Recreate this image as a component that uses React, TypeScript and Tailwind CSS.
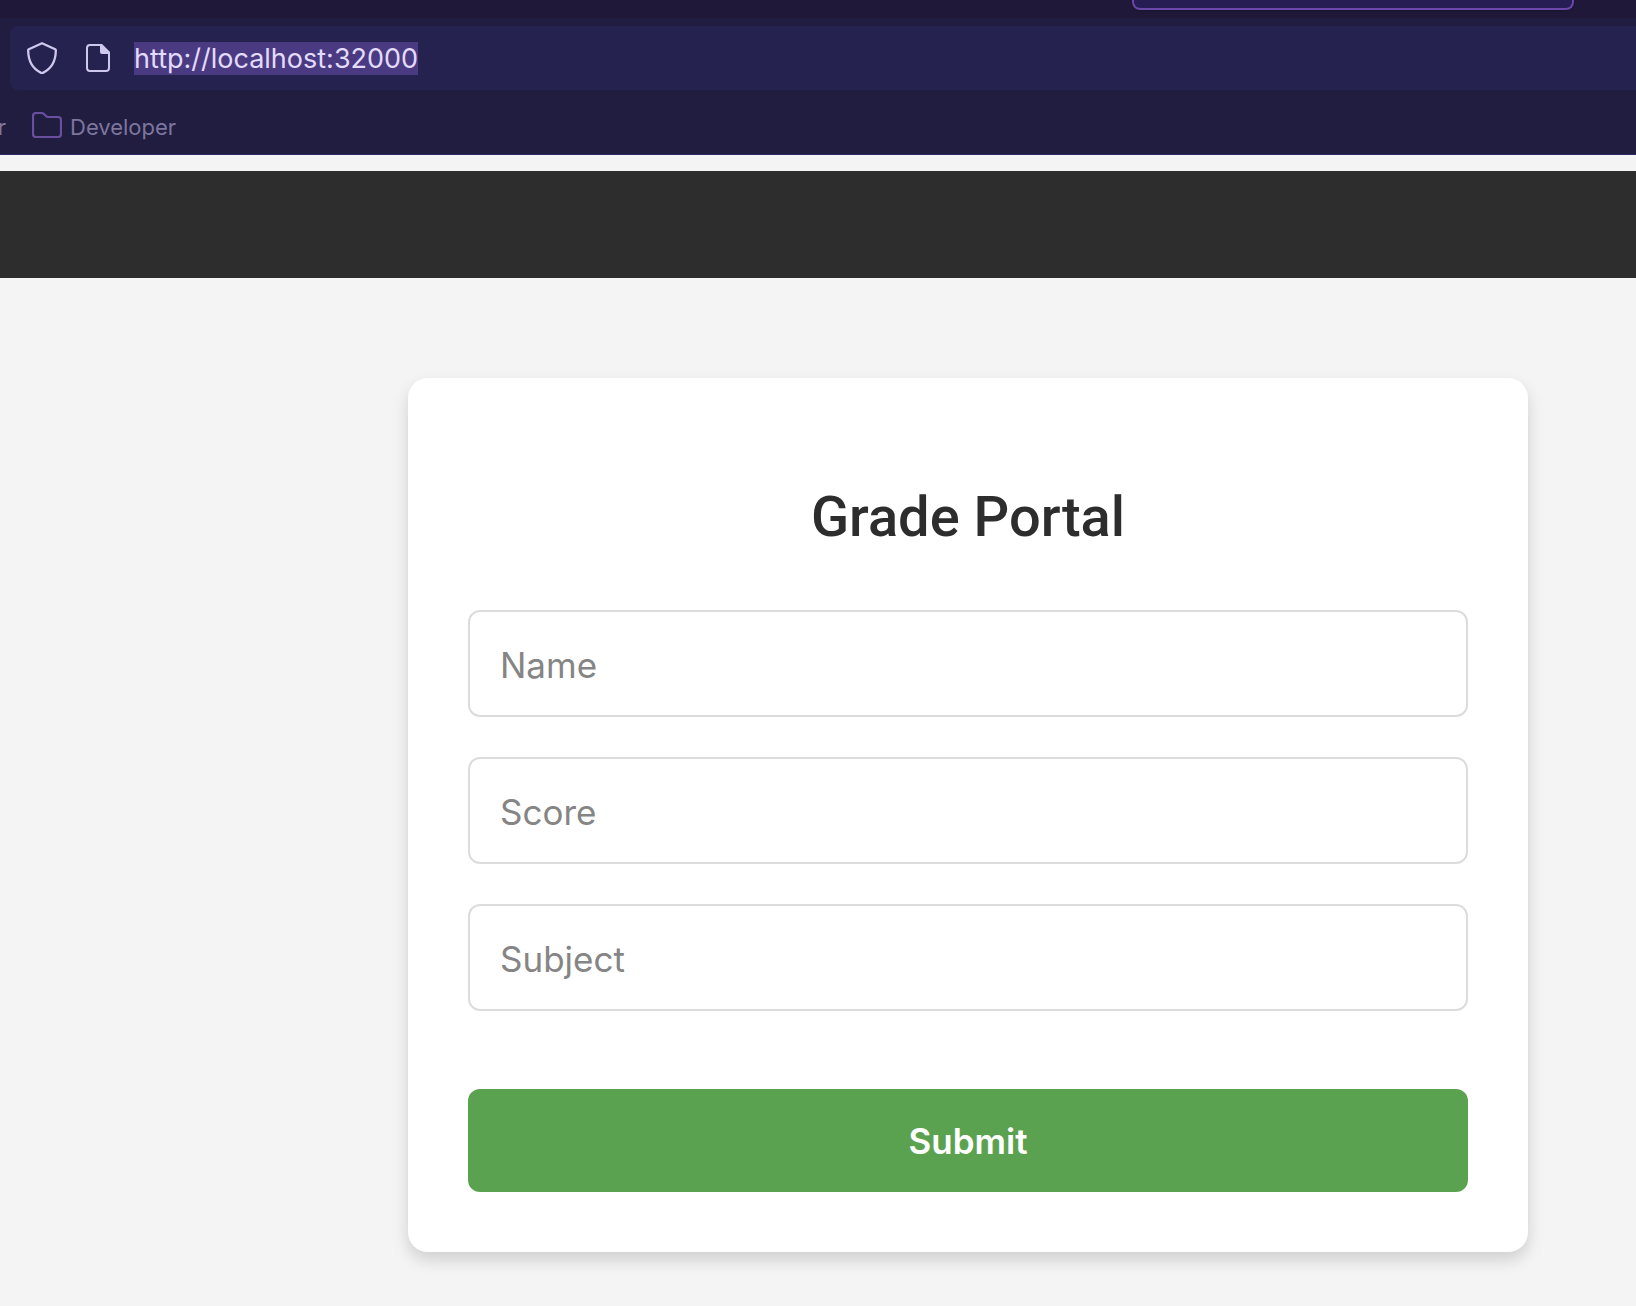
import { useEffect, useRef } from "react";

function ShieldIcon() {
  return (
    <svg className="h-8 w-[30px] shrink-0" viewBox="0 0 30 32" fill="none" stroke="#cfc8ee" strokeWidth="2.300" strokeLinejoin="round" aria-hidden="true">
      <path d="M15 1.200 28.200 7.200Q29 7.800 28.800 9C28.600 18.500 24.500 26.500 16.300 30.600Q15 31.200 13.700 30.600C5.500 26.500 1.400 18.500 1.200 9Q1 7.800 1.800 7.200Z" />
    </svg>
  );
}

function PageIcon() {
  return (
    <svg className="h-7 w-6 shrink-0" viewBox="0 0 24 28" fill="none" aria-hidden="true">
      <path d="M15 1H4Q1 1 1 4V24Q1 27 4 27H20Q23 27 23 24V9Z" stroke="#cfc8ee" strokeWidth="2" strokeLinejoin="round" />
      <path d="M14 0H16L24 8V10H16Q14 10 14 8Z" fill="#cfc8ee" />
    </svg>
  );
}

function FolderIcon() {
  return (
    <svg className="h-[26px] w-[30px] shrink-0" viewBox="0 0 30 26" fill="none" stroke="#6a4fa0" strokeWidth="2.200" strokeLinejoin="round" aria-hidden="true">
      <path d="M1 22V4Q1 1 4 1H9Q11 1 12.200 2.200L14.500 4.500Q15.500 5 17 5H26Q29 5 29 8V22Q29 25 26 25H4Q1 25 1 22Z" />
    </svg>
  );
}

function BrowserChrome() {
  const url = useRef<HTMLInputElement>(null);
  useEffect(() => {
    url.current?.focus();
    url.current?.select();
  }, []);

  return (
    <header className="border-b border-[#302b66] bg-[#201d41]">
      <div className="flex h-[18px] items-start justify-end bg-[#1f1838] pr-[62px]">
        <div className="h-[10px] w-[442px] rounded-b-lg border-2 border-t-0 border-[#6a47a8] bg-[#271d55] shadow" />
      </div>
      <div className="pt-2 pl-[10px]">
        <div className="flex h-16 items-center rounded-l-lg bg-[#25224f] pl-[17px]">
          <ShieldIcon />
          <span className="ml-[29px] flex">
            <PageIcon />
          </span>
          <input
            ref={url}
            aria-label="Address"
            defaultValue="http://localhost:32000"
            spellCheck={false}
            className="ml-6 min-w-0 flex-1 bg-transparent text-[27px] leading-[33px] text-[#e2dbfb] outline-none selection:bg-[#4a3a82] selection:text-[#e2dbfb]"
          />
        </div>
      </div>
      <nav aria-label="Bookmarks" className="flex h-16 items-center overflow-hidden pt-[6px] text-[22px] text-[#7d769d]">
        <a href="#other" className="flex w-8 shrink-0 pt-1">
          <span className="flex w-[6px] justify-end">r</span>
        </a>
        <a href="#developer" className="flex items-center gap-2">
          <FolderIcon />
          <span className="pt-1">Developer</span>
        </a>
      </nav>
    </header>
  );
}

function Field({ label }: { label: string }) {
  return (
    <input
      type="text"
      aria-label={label}
      placeholder={label}
      className="h-[107px] w-full rounded-xl border-2 border-[#dcdcdc] bg-white px-[30px] pt-[2px] text-[35px] text-[#2d2d2d] outline-none placeholder:text-[#858585]"
    />
  );
}

export default function App() {
  return (
    <div className="flex min-h-screen flex-col bg-[#f4f4f4] font-['Inter',sans-serif]">
      <BrowserChrome />
      <div className="mt-4 h-[107px] bg-[#2d2d2d]" />
      <main className="flex justify-center pt-[100px] pr-[108px] pb-[54px] pl-[408px]">
        <form
          onSubmit={(e) => e.preventDefault()}
          className="flex w-full max-w-[1120px] flex-col rounded-[20px] bg-white p-[60px] shadow-[0_8px_16px_rgba(0,0,0,0.15)]"
        >
          <h1 className="mt-[45px] text-center font-['Roboto',sans-serif] text-[56px] leading-[68px] font-medium text-[#2d2d2d]">
            Grade Portal
          </h1>
          <div className="mt-[59px] flex flex-col gap-10">
            <Field label="Name" />
            <Field label="Score" />
            <Field label="Subject" />
          </div>
          <button
            type="submit"
            className="mt-[78px] h-[103px] w-full rounded-xl bg-[#5aa24f] pt-[2px] text-[35px] font-semibold text-white"
          >
            Submit
          </button>
        </form>
      </main>
    </div>
  );
}
